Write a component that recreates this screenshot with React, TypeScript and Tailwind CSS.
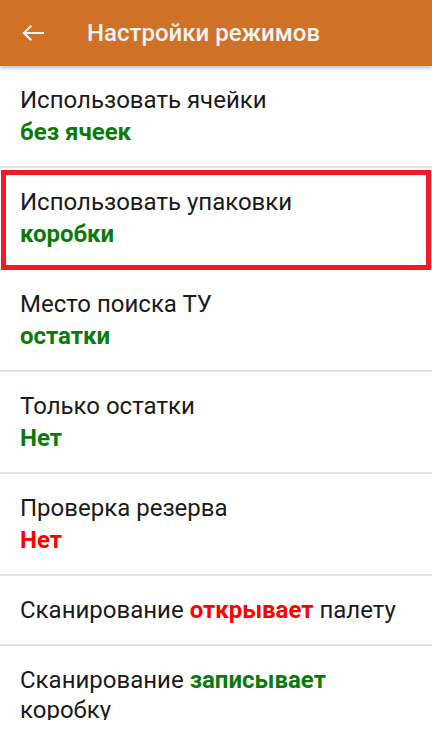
import React from "react"

type Row = {
  title: React.ReactNode
  value?: string
  valueColor?: "green" | "red"
  highlighted?: boolean
}

const rows: Row[] = [
  { title: "Использовать ячейки", value: "без ячеек", valueColor: "green" },
  { title: "Использовать упаковки", value: "коробки", valueColor: "green", highlighted: true },
  { title: "Место поиска ТУ", value: "остатки", valueColor: "green" },
  { title: "Только остатки", value: "Нет", valueColor: "green" },
  { title: "Проверка резерва", value: "Нет", valueColor: "red" },
  {
    title: (
      <>
        Сканирование <span className="font-bold text-[#ff0000]">открывает</span> палету
      </>
    ),
  },
  {
    title: (
      <>
        Сканирование <span className="font-bold text-[#0b7a0b]">записывает</span> коробку
      </>
    ),
  },
]

function BackArrow() {
  return (
    <svg width="24" height="24" viewBox="0 0 24 24" className="shrink-0">
      <path
        d="M4 12H23M4 12L10.5 5.5M4 12L10.5 18.5"
        fill="none"
        stroke="#f4f4f4"
        strokeWidth="2.2"
        strokeLinecap="square"
      />
    </svg>
  )
}

function SettingRow({ row }: { row: Row }) {
  return (
    <div className="relative border-b-2 border-[#e2e2e2] px-5 pt-[19px] pb-[19px]">
      <div className="text-[24px] leading-[30px] text-[#1a1a1a]">{row.title}</div>
      {row.value && (
        <div
          className={
            "mt-[2px] text-[24px] leading-[30px] font-bold " +
            (row.valueColor === "red" ? "text-[#ff0000]" : "text-[#0b7a0b]")
          }
        >
          {row.value}
        </div>
      )}
      {row.highlighted && (
        <div className="pointer-events-none absolute top-[2px] -bottom-[2px] left-[1px] right-[1px] border-[5px] border-[#ee1c25]" />
      )}
    </div>
  )
}

export default function App() {
  return (
    <div
      className="h-[739px] w-[432px] overflow-hidden bg-white"
      style={{ fontFamily: "Roboto, 'Noto Sans', sans-serif" }}
    >
      <header className="relative z-10 flex h-[66px] items-center bg-[#d07128] pl-5 shadow-[0_2px_4px_rgba(0,0,0,0.25)]">
        <BackArrow />
        <h1 className="ml-[43px] text-[24px] font-medium text-[#f4f4f4]">Настройки режимов</h1>
      </header>
      <div className="h-[654px] overflow-hidden">
        {rows.map((row, i) => (
          <SettingRow key={i} row={row} />
        ))}
      </div>
    </div>
  )
}
